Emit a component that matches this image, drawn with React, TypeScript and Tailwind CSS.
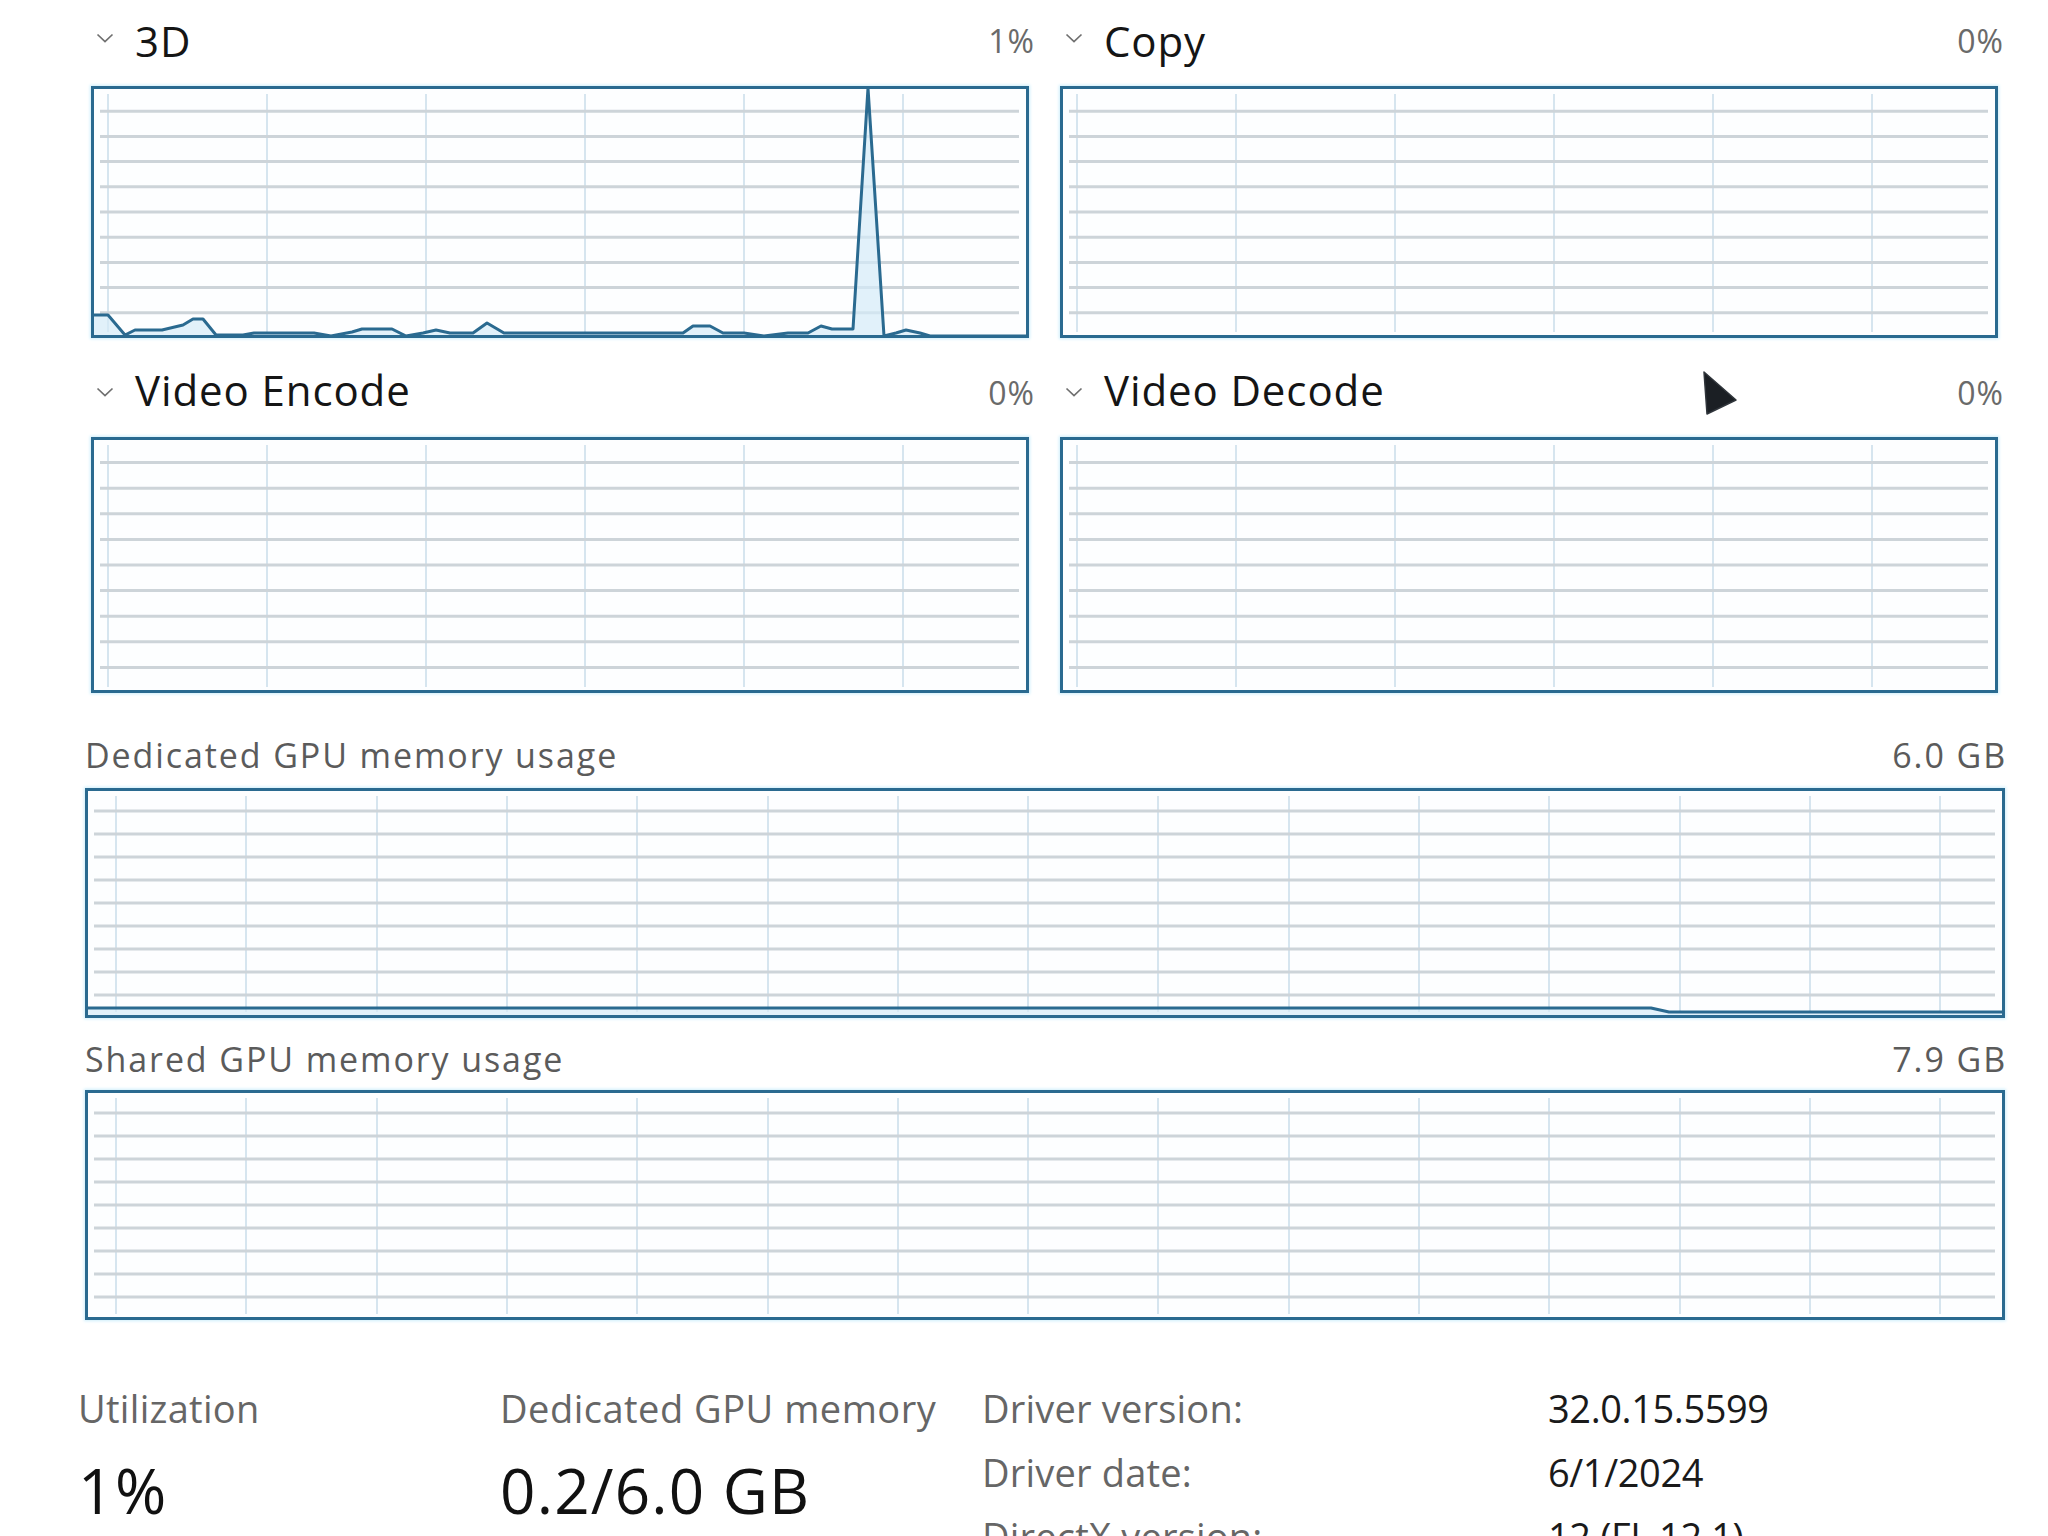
import React from "react";

type GraphProps = {
  w: number;
  h: number;
  vlines: number[];
  data?: [number, number][];
  className: string;
};

function Graph({ w, h, vlines, data, className }: GraphProps) {
  const hl = [1, 2, 3, 4, 5, 6, 7, 8, 9].map((k) => (k * h) / 10);
  const pts = data ? data.map((p) => p.join(",")).join(" ") : "";
  const fillPts = data
    ? `${data[0][0]},${h} ` + pts + ` ${data[data.length - 1][0]},${h}`
    : "";
  return (
    <div
      className={
        "relative box-border border-[3px] border-[#2a6a90] bg-[#fdfeff] shadow-[0_0_3px_1px_#cdeefb] " +
        className
      }
    >
      <svg
        width={w - 6}
        height={h - 6}
        viewBox={`3 3 ${w - 6} ${h - 6}`}
        className="block"
      >
        {vlines.map((x) => (
          <line
            key={"v" + x}
            x1={x}
            x2={x}
            y1={8}
            y2={h - 6}
            stroke="#cfe1ed"
            strokeWidth={1.7}
          />
        ))}
        {hl.map((y) => (
          <line
            key={"h" + y}
            x1={9}
            x2={w - 10}
            y1={y}
            y2={y}
            stroke="#cdd4d9"
            strokeWidth={3}
          />
        ))}
        {data && (
          <>
            <polygon points={fillPts} fill="#d4ebf8" fillOpacity={0.7} />
            <polyline
              points={pts}
              fill="none"
              stroke="#2a6a90"
              strokeWidth={3}
              strokeLinejoin="round"
            />
          </>
        )}
      </svg>
    </div>
  );
}

function Chevron() {
  return (
    <svg width="18" height="10" viewBox="0 0 18 10" className="block shrink-0">
      <polyline
        points="1.5,1.5 9,8.5 16.5,1.5"
        fill="none"
        stroke="#6f6f6f"
        strokeWidth="1.7"
      />
    </svg>
  );
}

const smallV = [17, 176, 335, 494, 653, 812];
const bigV = [31, 161, 292, 422, 552, 683, 813, 943, 1073, 1204, 1334, 1464, 1595, 1725, 1855];

const data3D: [number, number][] = [
  [0, 229], [17, 229], [34, 249], [44, 244], [71, 244], [92, 239], [102, 233], [112, 233],
  [125, 249], [152, 249], [163, 247], [223, 247], [240, 250], [261, 246], [271, 243],
  [301, 243], [315, 250], [332, 247], [345, 244], [359, 247], [382, 247], [396, 237],
  [413, 247], [592, 247], [602, 240], [619, 240], [632, 247], [653, 247], [673, 250],
  [697, 247], [717, 247], [730, 240], [741, 243], [762, 243], [777, 2], [793, 250],
  [805, 247], [815, 244], [829, 247], [839, 250], [935, 250],
];

const dataDedicated: [number, number][] = [
  [0, 220], [1566, 220], [1584, 224], [1917, 224],
];

function EngineHeader({
  name,
  pct,
  row,
}: {
  name: string;
  pct: string;
  row: 1 | 2;
}) {
  if (row === 1) {
    return (
      <div className="flex h-[86px] justify-between mr-[-6px]">
        <div className="flex gap-[21px] pl-[5px]">
          <div className="pt-[33px]">
            <Chevron />
          </div>
          <div className="pt-[20px] text-[42px] leading-none tracking-[0.9px] text-[#151515]">
            {name}
          </div>
        </div>
        <div className="pt-[25px] text-[32px] leading-none tracking-[1px] text-[#6a6a6a]">
          {pct}
        </div>
      </div>
    );
  }
  return (
    <div className="flex h-[99px] justify-between mr-[-6px]">
      <div className="flex gap-[21px] pl-[5px]">
        <div className="pt-[49px]">
          <Chevron />
        </div>
        <div className="pt-[31px] text-[42px] leading-none tracking-[0.9px] text-[#151515]">
          {name}
        </div>
      </div>
      <div className="pt-[39px] text-[32px] leading-none tracking-[1px] text-[#6a6a6a]">
        {pct}
      </div>
    </div>
  );
}

export default function App() {
  return (
    <div className="relative h-[1536px] w-[2048px] overflow-hidden bg-white font-['Open_Sans','Noto_Sans',sans-serif]">
      {/* Engines */}
      <div className="ml-[91px] grid w-[1907px] grid-cols-[938px_938px] gap-x-[31px]">
        <div className="flex flex-col">
          <EngineHeader name="3D" pct="1%" row={1} />
          <Graph w={938} h={252} vlines={smallV} data={data3D} className="h-[252px] w-[938px]" />
        </div>
        <div className="flex flex-col">
          <EngineHeader name="Copy" pct="0%" row={1} />
          <Graph w={938} h={252} vlines={smallV} className="h-[252px] w-[938px]" />
        </div>
        <div className="flex flex-col">
          <EngineHeader name="Video Encode" pct="0%" row={2} />
          <Graph w={938} h={256} vlines={smallV} className="h-[256px] w-[938px]" />
        </div>
        <div className="flex flex-col">
          <EngineHeader name="Video Decode" pct="0%" row={2} />
          <Graph w={938} h={256} vlines={smallV} className="h-[256px] w-[938px]" />
        </div>
      </div>

      {/* Dedicated memory */}
      <div className="ml-[85px] flex h-[95px] w-[1922px] justify-between pt-[45px] text-[34px] leading-none tracking-[1.9px] text-[#5b5b5b]">
        <span>Dedicated GPU memory usage</span>
        <span>6.0 GB</span>
      </div>
      <div className="ml-[85px]">
        <Graph w={1920} h={230} vlines={bigV} data={dataDedicated} className="h-[230px] w-[1920px]" />
      </div>

      {/* Shared memory */}
      <div className="ml-[85px] flex h-[72px] w-[1922px] justify-between pt-[24px] text-[34px] leading-none tracking-[1.9px] text-[#5b5b5b]">
        <span>Shared GPU memory usage</span>
        <span>7.9 GB</span>
      </div>
      <div className="ml-[85px]">
        <Graph w={1920} h={230} vlines={bigV} className="h-[230px] w-[1920px]" />
      </div>

      {/* Stats */}
      <div className="flex pl-[78px] pt-[69px]">
        <div className="flex w-[422px] flex-col gap-[32px]">
          <div className="text-[38px] leading-none tracking-[0.3px] text-[#666666]">Utilization</div>
          <div className="text-[62px] leading-none tracking-[1.5px] text-[#111111]">1%</div>
        </div>
        <div className="flex w-[482px] flex-col gap-[32px]">
          <div className="text-[38px] leading-none tracking-[0.5px] text-[#666666]">Dedicated GPU memory</div>
          <div className="text-[62px] leading-none tracking-[1.2px] text-[#111111]">0.2/6.0 GB</div>
        </div>
        <div className="grid grid-cols-[566px_auto] gap-y-[26px] text-[38px] leading-none">
          <div className="tracking-[0.2px] text-[#666666]">Driver version:</div>
          <div className="tracking-[-0.4px] text-[#1a1a1a]">32.0.15.5599</div>
          <div className="tracking-[0.2px] text-[#666666]">Driver date:</div>
          <div className="tracking-[-0.4px] text-[#1a1a1a]">6/1/2024</div>
          <div className="tracking-[0.2px] text-[#666666]">DirectX version:</div>
          <div className="tracking-[-0.4px] text-[#1a1a1a]">12 (FL 12.1)</div>
        </div>
      </div>

      {/* Mouse cursor */}
      <div className="absolute left-[1700px] top-[368px]">
        <svg width="42" height="52" viewBox="0 0 42 52" className="block">
          <polygon points="4,4 36,32 7,46" fill="#1b1f24" stroke="#30353b" strokeWidth="1.5" strokeLinejoin="round" />
        </svg>
      </div>
    </div>
  );
}
